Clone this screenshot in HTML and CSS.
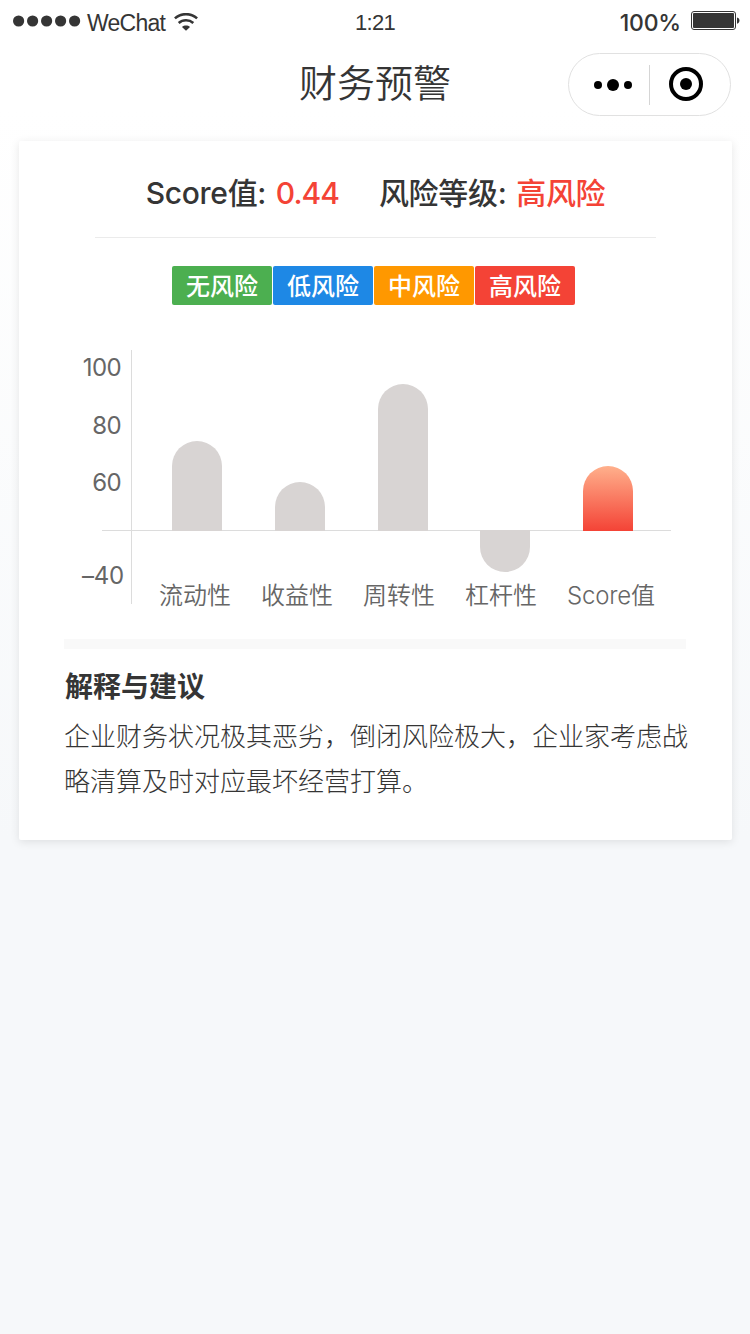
FILE: index.html
```html
<!DOCTYPE html>
<html lang="zh-CN">
<head>
  <meta charset="UTF-8" />
  <title>财务预警</title>
  <link rel="stylesheet" href="styles.css">
</head>
<body>

  <header>
    <div class="status">
      <div class="status-left">
        <svg class="signal" width="68" height="12" viewBox="0 0 68 12">
          <circle cx="5.6" cy="6" r="5.6" />
          <circle cx="19.6" cy="6" r="5.6" />
          <circle cx="33.6" cy="6" r="5.6" />
          <circle cx="47.6" cy="6" r="5.6" />
          <circle cx="61.6" cy="6" r="5.6" />
        </svg>
        <span class="carrier">WeChat</span>
        <svg class="wifi" width="24" height="18" viewBox="0 0 24 18" fill="none" stroke="#353535">
          <path d="M0.9 5.4C7 -0.3 17 -0.3 23.1 5.4" stroke-width="2.5" />
          <path d="M4.7 10C8.8 6.3 15.2 6.3 19.3 10" stroke-width="2.5" />
          <path d="M8 13.9C10.2 12.1 13.8 12.1 16 13.9L12 17.8Z" fill="#353535" stroke="none" />
        </svg>
      </div>
      <span class="time">1:21</span>
      <div class="status-right">
        <span class="percent">100%</span>
        <svg class="battery" width="49" height="20" viewBox="0 0 49 20">
          <rect x="0.5" y="0.5" width="44" height="18" rx="2.5" fill="none" stroke="#353535" />
          <rect x="2" y="2" width="41" height="15" rx="1" fill="#353535" />
          <path d="M46 6.5C49.3 7 49.3 12 46 12.7Z" fill="#353535" />
        </svg>
      </div>
    </div>

    <div class="navbar">
      <h1>财务预警</h1>
      <div class="capsule">
        <svg class="more" width="38" height="12" viewBox="0 0 38 12">
          <circle cx="4" cy="6" r="4" />
          <circle cx="19" cy="6" r="6" />
          <circle cx="34" cy="6" r="4" />
        </svg>
        <span class="divider"></span>
        <svg class="close" width="34" height="34" viewBox="0 0 34 34">
          <circle cx="17" cy="17" r="15" fill="none" stroke="#000" stroke-width="4" />
          <circle cx="17" cy="17" r="6" />
        </svg>
      </div>
    </div>
  </header>

  <main class="card">
    <div class="summary">
      <div>Score值: <span class="danger value">0.44</span></div>
      <div>风险等级: <span class="danger">高风险</span></div>
    </div>

    <div class="levels">
      <span class="level none">无风险</span>
      <span class="level low">低风险</span>
      <span class="level mid">中风险</span>
      <span class="level high">高风险</span>
    </div>

    <div class="chart">
      <div class="scale">
        <span>100</span>
        <span>80</span>
        <span>60</span>
        <span class="minus">–40</span>
      </div>
      <div class="plot">
        <div class="bars">
          <div class="bar" style="height: 90px"></div>
          <div class="bar" style="height: 49px"></div>
          <div class="bar" style="height: 147px"></div>
          <div class="bar negative" style="height: 42px; margin-bottom: -41px"></div>
          <div class="bar score" style="height: 65px"></div>
        </div>
        <div class="names">
          <span>流动性</span>
          <span>收益性</span>
          <span>周转性</span>
          <span>杠杆性</span>
          <span>Score值</span>
        </div>
      </div>
    </div>

    <section class="advice">
      <h2>解释与建议</h2>
      <p>企业财务状况极其恶劣，倒闭风险极大，企业家考虑战略清算及时对应最坏经营打算。</p>
    </section>
  </main>

</body>
</html>
```
FILE: styles.css
```css
/* Reset */
* {
  box-sizing: border-box;
  margin: 0;
  padding: 0;
}
body {
  font-family: Inter, "Noto Sans CJK SC", sans-serif;
  font-feature-settings: "calt" 0;
  min-height: 1334px;
  background: linear-gradient(#fff 110px, #f6f8fa 840px);
  color: #353535;
}
svg {
  display: block;
  flex-shrink: 0;
}

/* Status bar */
.status {
  display: grid;
  grid-template-columns: 1fr auto 1fr;
  height: 42px;
  padding: 0 10px 0 13px;
  font-family: "Liberation Sans", "Noto Sans CJK SC", sans-serif;
  font-size: 23px;
  line-height: 44px;
}
.status-left, .status-right {
  display: flex;
  align-items: center;
}
.status-right {
  justify-content: flex-end;
  gap: 10px;
}
.signal {
  margin-top: -4px;
  fill: #353535;
}
.carrier {
  margin-left: 6px;
  letter-spacing: -0.75px;
}
.wifi {
  margin: -3px 0 0 9px;
}
.time {
  margin-left: -3px;
  font-size: 22px;
  letter-spacing: -0.7px;
  line-height: 46px;
}
.percent {
  font-family: Inter, sans-serif;
  font-size: 23px;
  font-weight: 450;
  letter-spacing: -0.2px;
  line-height: 46px;
}
.battery {
  margin-top: -4px;
}

/* Title bar */
.navbar {
  display: grid;
  grid-template-columns: 1fr auto 1fr;
  align-items: center;
  height: 85px;
  padding: 0 19px;
}
h1 {
  grid-column: 2;
  margin-top: -4px;
  font-size: 38px;
  font-weight: 350;
  line-height: 54px;
}
.capsule {
  justify-self: end;
  display: flex;
  align-items: center;
  width: 163px;
  height: 63px;
  padding-left: 25px;
  border: 1px solid #e1e1e1;
  border-radius: 32px;
  background: #fff;
}
.divider {
  width: 1px;
  height: 40px;
  margin: 0 19px 0 17px;
  background: #d5d5d5;
}
.close {
  margin-top: -2px;
}

/* Card */
.card {
  width: 713px;
  height: 699px;
  margin: 14px 0 0 19px;
  padding: 0 45px;
  border-radius: 2px;
  background: #fff;
  box-shadow: 0 2px 10px rgb(0 0 0 / 0.1);
}
.summary {
  display: flex;
  justify-content: center;
  gap: 40px;
  height: 97px;
  margin: 0 31px;
  border-bottom: 1px solid #ebebeb;
  font-size: 30px;
  font-weight: 500;
  line-height: 105px;
  letter-spacing: -0.3px;
  word-spacing: 2px;
  white-space: nowrap;
}
.danger {
  color: #f44336;
}
.value {
  font-weight: 450;
  letter-spacing: -1px;
}

.levels {
  display: flex;
  gap: 1px;
  margin: 28px 0 0 108px;
}
.level {
  width: 100px;
  height: 39px;
  border-radius: 2px;
  color: #fff;
  font-size: 24px;
  font-weight: 500;
  line-height: 41px;
  text-align: center;
}
.none { background: #4caf50; }
.low { background: #1e88e5; }
.mid { background: #ff9800; }
.high { background: #f44336; }

/* Chart */
.chart {
  position: relative;
  display: flex;
  height: 254px;
  margin-top: 45px;
  color: #666;
  font-size: 24px;
  font-weight: 350;
}
/* zero line */
.chart::before {
  content: "";
  position: absolute;
  top: 180px;
  left: 38px;
  width: 569px;
  height: 1px;
  background: #dcdcdc;
}
.scale {
  display: flex;
  flex-direction: column;
  width: 57px;
  padding-top: 4px;
  font-weight: 400;
  line-height: 28px;
  letter-spacing: -0.6px;
  text-align: right;
}
.scale span {
  margin-bottom: 29.5px;
}
.scale .minus {
  margin: 35px -3px 0 0;
  letter-spacing: -0.2px;
}
.plot {
  margin-left: 10px;
  border-left: 1px solid #dcdcdc;
}
.bars {
  position: relative;
  display: flex;
  align-items: flex-end;
  gap: 52.75px;
  height: 181px;
  padding-left: 40px;
}
.bar {
  width: 50px;
  border-radius: 25px 25px 0 0;
  background: #d8d4d3;
}
.negative {
  border-radius: 0 0 25px 25px;
}
.score {
  background: linear-gradient(#ffb08c, #f44336);
}
.names {
  display: flex;
  gap: 30px;
  margin-top: 47px;
  padding-left: 27px;
  line-height: 36px;
  white-space: nowrap;
}
.names span:last-child {
  letter-spacing: -0.2px;
}

/* Advice */
.advice {
  width: 624px;
  margin-top: 35px;
}
.advice::before {
  content: "";
  display: block;
  width: 622px;
  height: 10px;
  background: #f9f9f9;
}
h2 {
  margin: 18px 0 0 1px;
  font-size: 28px;
  font-weight: 700;
  line-height: 40px;
}
p {
  margin-top: 7px;
  font-size: 26px;
  font-weight: 300;
  line-height: 45px;
}
```
